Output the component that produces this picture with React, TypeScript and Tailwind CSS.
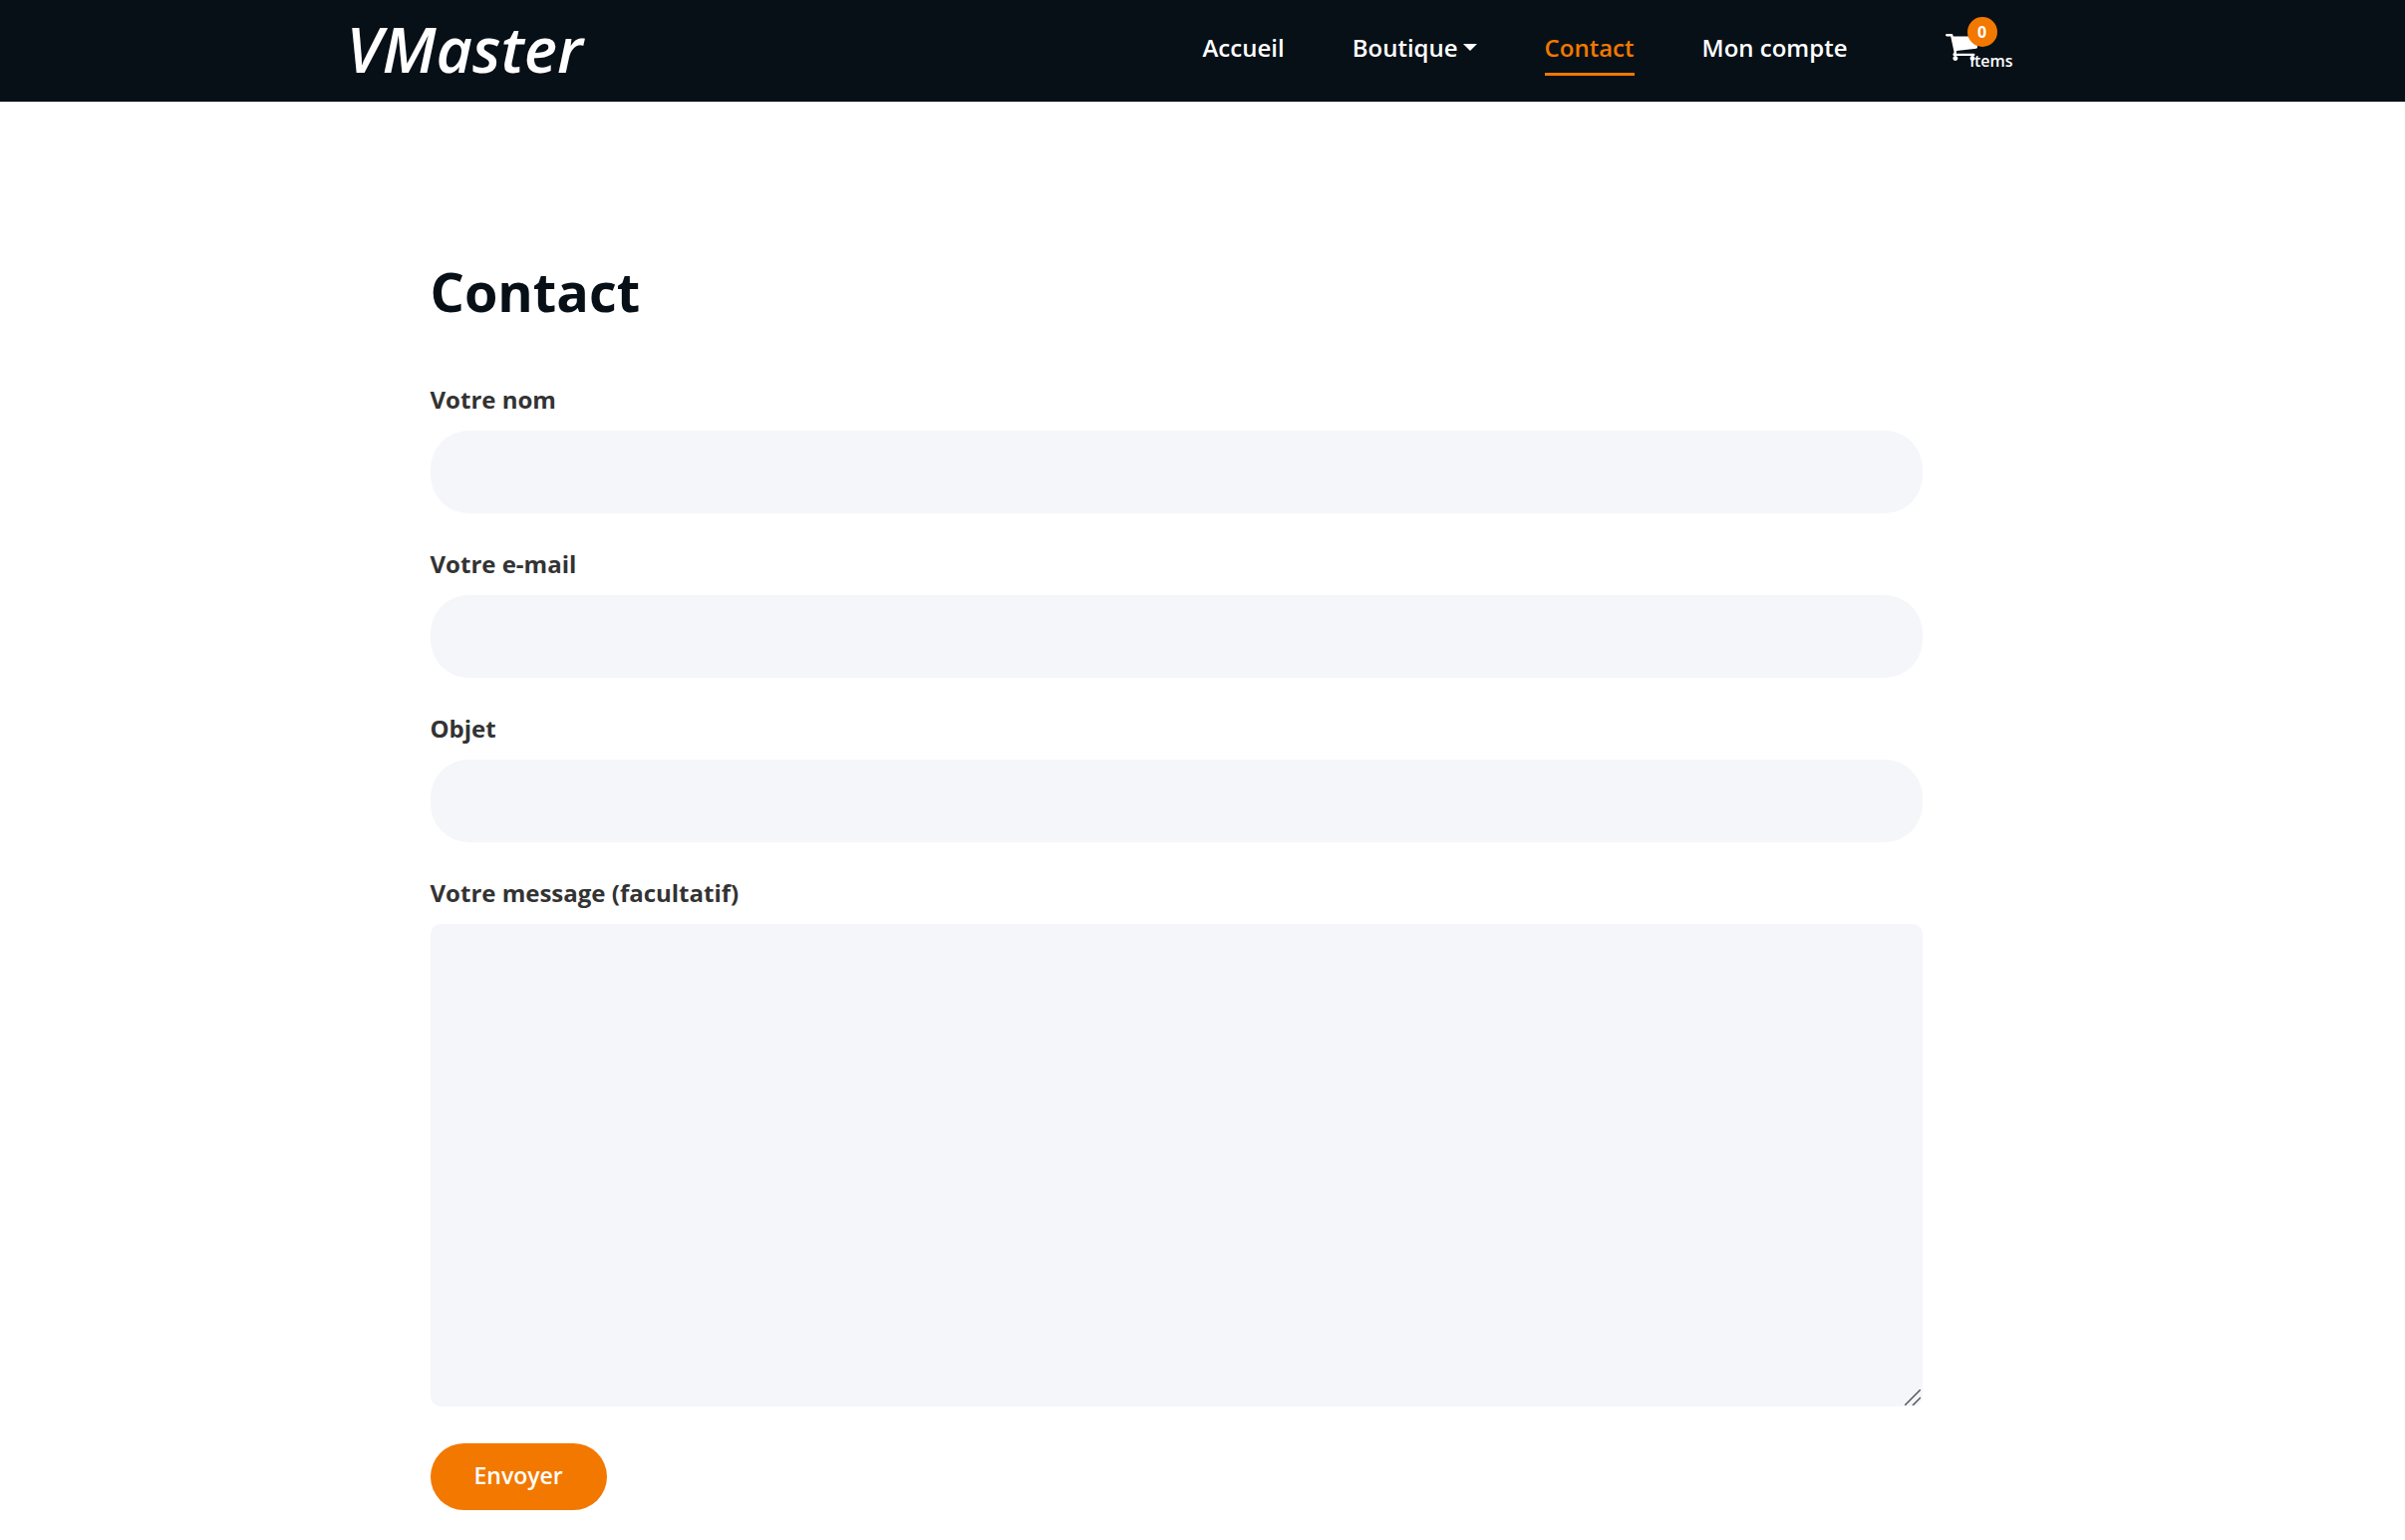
import type { ReactNode } from "react";

function CartIcon() {
  return (
    <svg viewBox="0 256 1664 1408" className="h-[27px] w-8 fill-white" aria-hidden="true">
      <path d="M640 1536q0 52-38 90t-90 38-90-38-38-90 38-90 90-38 90 38 38 90zm896 0q0 52-38 90t-90 38-90-38-38-90 38-90 90-38 90 38 38 90zm128-1088v512q0 24-16.5 42.5t-40.5 21.5l-1044 122q13 60 13 70 0 16-24 64h920q26 0 45 19t19 45-19 45-45 19h-1024q-26 0-45-19t-19-45q0-11 8-31.5t16-36 21.5-40 15.5-29.5l-177-823h-204q-26 0-45-19t-19-45 19-45 45-19h256q16 0 28.5 6.5t19.5 15.5 13 24.5 8 26 5.5 29.5 4.5 26h1201q26 0 45 19t19 45z" />
    </svg>
  );
}

function NavLink({ active = false, children }: { active?: boolean; children: ReactNode }) {
  return (
    <a
      href="#"
      aria-current={active ? "page" : undefined}
      className={
        active
          ? "flex items-center border-b-3 border-[#f27800] pt-0.5 text-[#f27800]"
          : "flex items-center border-b-3 border-transparent pt-0.5"
      }
    >
      {children}
    </a>
  );
}

function Header() {
  return (
    <header className="bg-[#081017] text-white">
      <div className="mx-auto flex h-[102px] max-w-[1718px] items-start justify-between pr-[46px]">
        <a href="#" className="text-[63px] leading-[98px] font-semibold italic">
          VMaster
        </a>
        <nav className="mt-5 flex h-14 items-stretch text-2xl font-semibold" aria-label="Menu principal">
          <div className="flex gap-[68px]">
            <NavLink>Accueil</NavLink>
            <NavLink>
              Boutique
              <svg viewBox="0 0 14 7" className="ml-[5px] h-[7px] w-3.5 fill-white" aria-hidden="true">
                <path d="M0 0h14L7 7z" />
              </svg>
            </NavLink>
            <NavLink active>Contact</NavLink>
            <NavLink>Mon compte</NavLink>
          </div>
          <a href="#" className="relative ml-[98px] block w-[68px] pt-3.5">
            <CartIcon />
            <span className="absolute -top-[3px] left-[22px] flex size-[30px] items-center justify-center rounded-full bg-[#f27800] text-base font-bold">
              0
            </span>
            <span className="absolute top-[29px] right-0 text-base leading-6">items</span>
          </a>
        </nav>
      </div>
    </header>
  );
}

const fields = [
  { id: "nom", label: "Votre nom", type: "text" },
  { id: "email", label: "Votre e-mail", type: "email" },
  { id: "objet", label: "Objet", type: "text" },
];

function FieldLabel({ id, children }: { id: string; children: ReactNode }) {
  return (
    <label htmlFor={id} className="mb-[13px] block text-2xl leading-9 font-bold text-[#333]">
      {children}
    </label>
  );
}

export default function App() {
  return (
    <div className="min-h-screen bg-white font-['Open_Sans',sans-serif]">
      <Header />
      <main className="mx-auto max-w-[1710px] pt-[149px] pr-[133px] pb-[30px] pl-20">
        <h1 className="mb-[50px] text-[54px] leading-[82px] font-bold text-[#081017]">Contact</h1>
        <form>
          {fields.map((field) => (
            <div key={field.id} className="mb-[33px]">
              <FieldLabel id={field.id}>{field.label}</FieldLabel>
              <input
                id={field.id}
                type={field.type}
                className="block h-[83px] w-full rounded-[38px] bg-[#f5f6fa] px-9 text-2xl text-[#333] outline-none"
              />
            </div>
          ))}
          <div className="relative mb-[37px]">
            <FieldLabel id="message">Votre message (facultatif)</FieldLabel>
            <textarea
              id="message"
              className="block h-[484px] w-full resize-none rounded-[10px] bg-[#f5f6fa] px-9 py-5 text-2xl text-[#333] outline-none"
            />
            <svg
              viewBox="0 0 16 16"
              className="absolute right-0.5 bottom-px size-4 stroke-[#55555a]"
              strokeWidth="1.5"
              aria-hidden="true"
            >
              <path d="M0 16 16 0M8 16l8-8" />
            </svg>
          </div>
          <button
            type="button"
            className="h-[67px] rounded-full bg-[#f27800] px-11 pb-0.5 text-[23px] font-semibold text-white"
          >
            Envoyer
          </button>
        </form>
      </main>
    </div>
  );
}
